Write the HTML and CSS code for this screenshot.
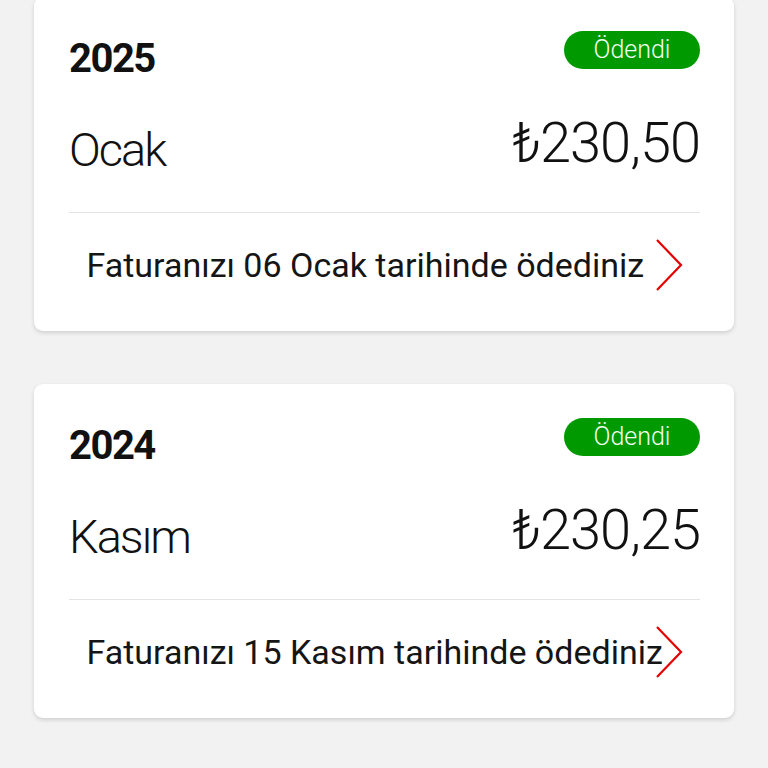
FILE: index.html
```html
<!DOCTYPE html>
<html lang="tr">
<head>
<meta charset="utf-8">
<title>Faturalar</title>
<link rel="stylesheet" href="styles.css">
</head>
<body>
<main class="list">
  <section class="card">
    <div class="card-head">
      <span class="year">2025</span>
      <span class="badge">Ödendi</span>
    </div>
    <div class="card-row">
      <span class="month">Ocak</span>
      <span class="amount">₺230,50</span>
    </div>
    <div class="divider"></div>
    <div class="card-foot">
      <span class="foot-text">Faturanızı 06 Ocak tarihinde ödediniz</span>
      <svg class="chev" width="28" height="52" viewBox="0 0 28 52"><polyline points="2,1 26,26 2,51" fill="none" stroke="#e60000" stroke-width="2.2"/></svg>
    </div>
  </section>
  <section class="card">
    <div class="card-head">
      <span class="year">2024</span>
      <span class="badge">Ödendi</span>
    </div>
    <div class="card-row">
      <span class="month">Kasım</span>
      <span class="amount">₺230,25</span>
    </div>
    <div class="divider"></div>
    <div class="card-foot">
      <span class="foot-text">Faturanızı 15 Kasım tarihinde ödediniz</span>
      <svg class="chev" width="28" height="52" viewBox="0 0 28 52"><polyline points="2,1 26,26 2,51" fill="none" stroke="#e60000" stroke-width="2.2"/></svg>
    </div>
  </section>
</main>
</body>
</html>
```

FILE: styles.css
```css
* { box-sizing: border-box; }
html, body { margin: 0; padding: 0; }
body {
  background: #f2f2f2;
  font-family: Roboto, "Liberation Sans", sans-serif;
  color: #111;
  width: 768px;
  height: 768px;
  overflow: hidden;
}
.list {
  display: flex;
  flex-direction: column;
  gap: 53px;
  padding: 0 34px;
  margin-top: -3px;
}
.card {
  background: #fff;
  border-radius: 9px;
  box-shadow: 0 2px 4px rgba(0,0,0,0.14);
  height: 334px;
  padding: 34px 34px 0 35px;
}
.card-head {
  display: flex;
  justify-content: space-between;
  align-items: flex-start;
}
.year {
  font-weight: 700;
  font-size: 40px;
  line-height: 41px;
  letter-spacing: -1.5px;
  margin-top: 7px;
}
.badge {
  width: 136px;
  height: 38px;
  border-radius: 19px;
  background: #009a00;
  color: #f2fff2;
  font-size: 25px;
  font-weight: 300;
  display: flex;
  align-items: center;
  justify-content: center;
  padding-bottom: 2px;
}
.card-row {
  display: flex;
  justify-content: space-between;
  align-items: flex-start;
  margin-top: 35px;
}
.month {
  font-weight: 300;
  font-size: 47px;
  line-height: 48px;
  letter-spacing: -2px;
  margin-top: 12px;
}
.amount {
  font-weight: 300;
  font-size: 56px;
  line-height: 58px;
  letter-spacing: -1px;
}
.divider {
  height: 1px;
  background: #e4e4e4;
  margin-top: 38px;
}
.card-foot {
  display: flex;
  justify-content: center;
  align-items: center;
  margin-top: 26px;
}
.foot-text {
  width: 568px;
  flex: none;
  white-space: nowrap;
  font-size: 34px;
  line-height: 34px;
  color: #151515;
}
.chev { flex: none; display: block; }
```
